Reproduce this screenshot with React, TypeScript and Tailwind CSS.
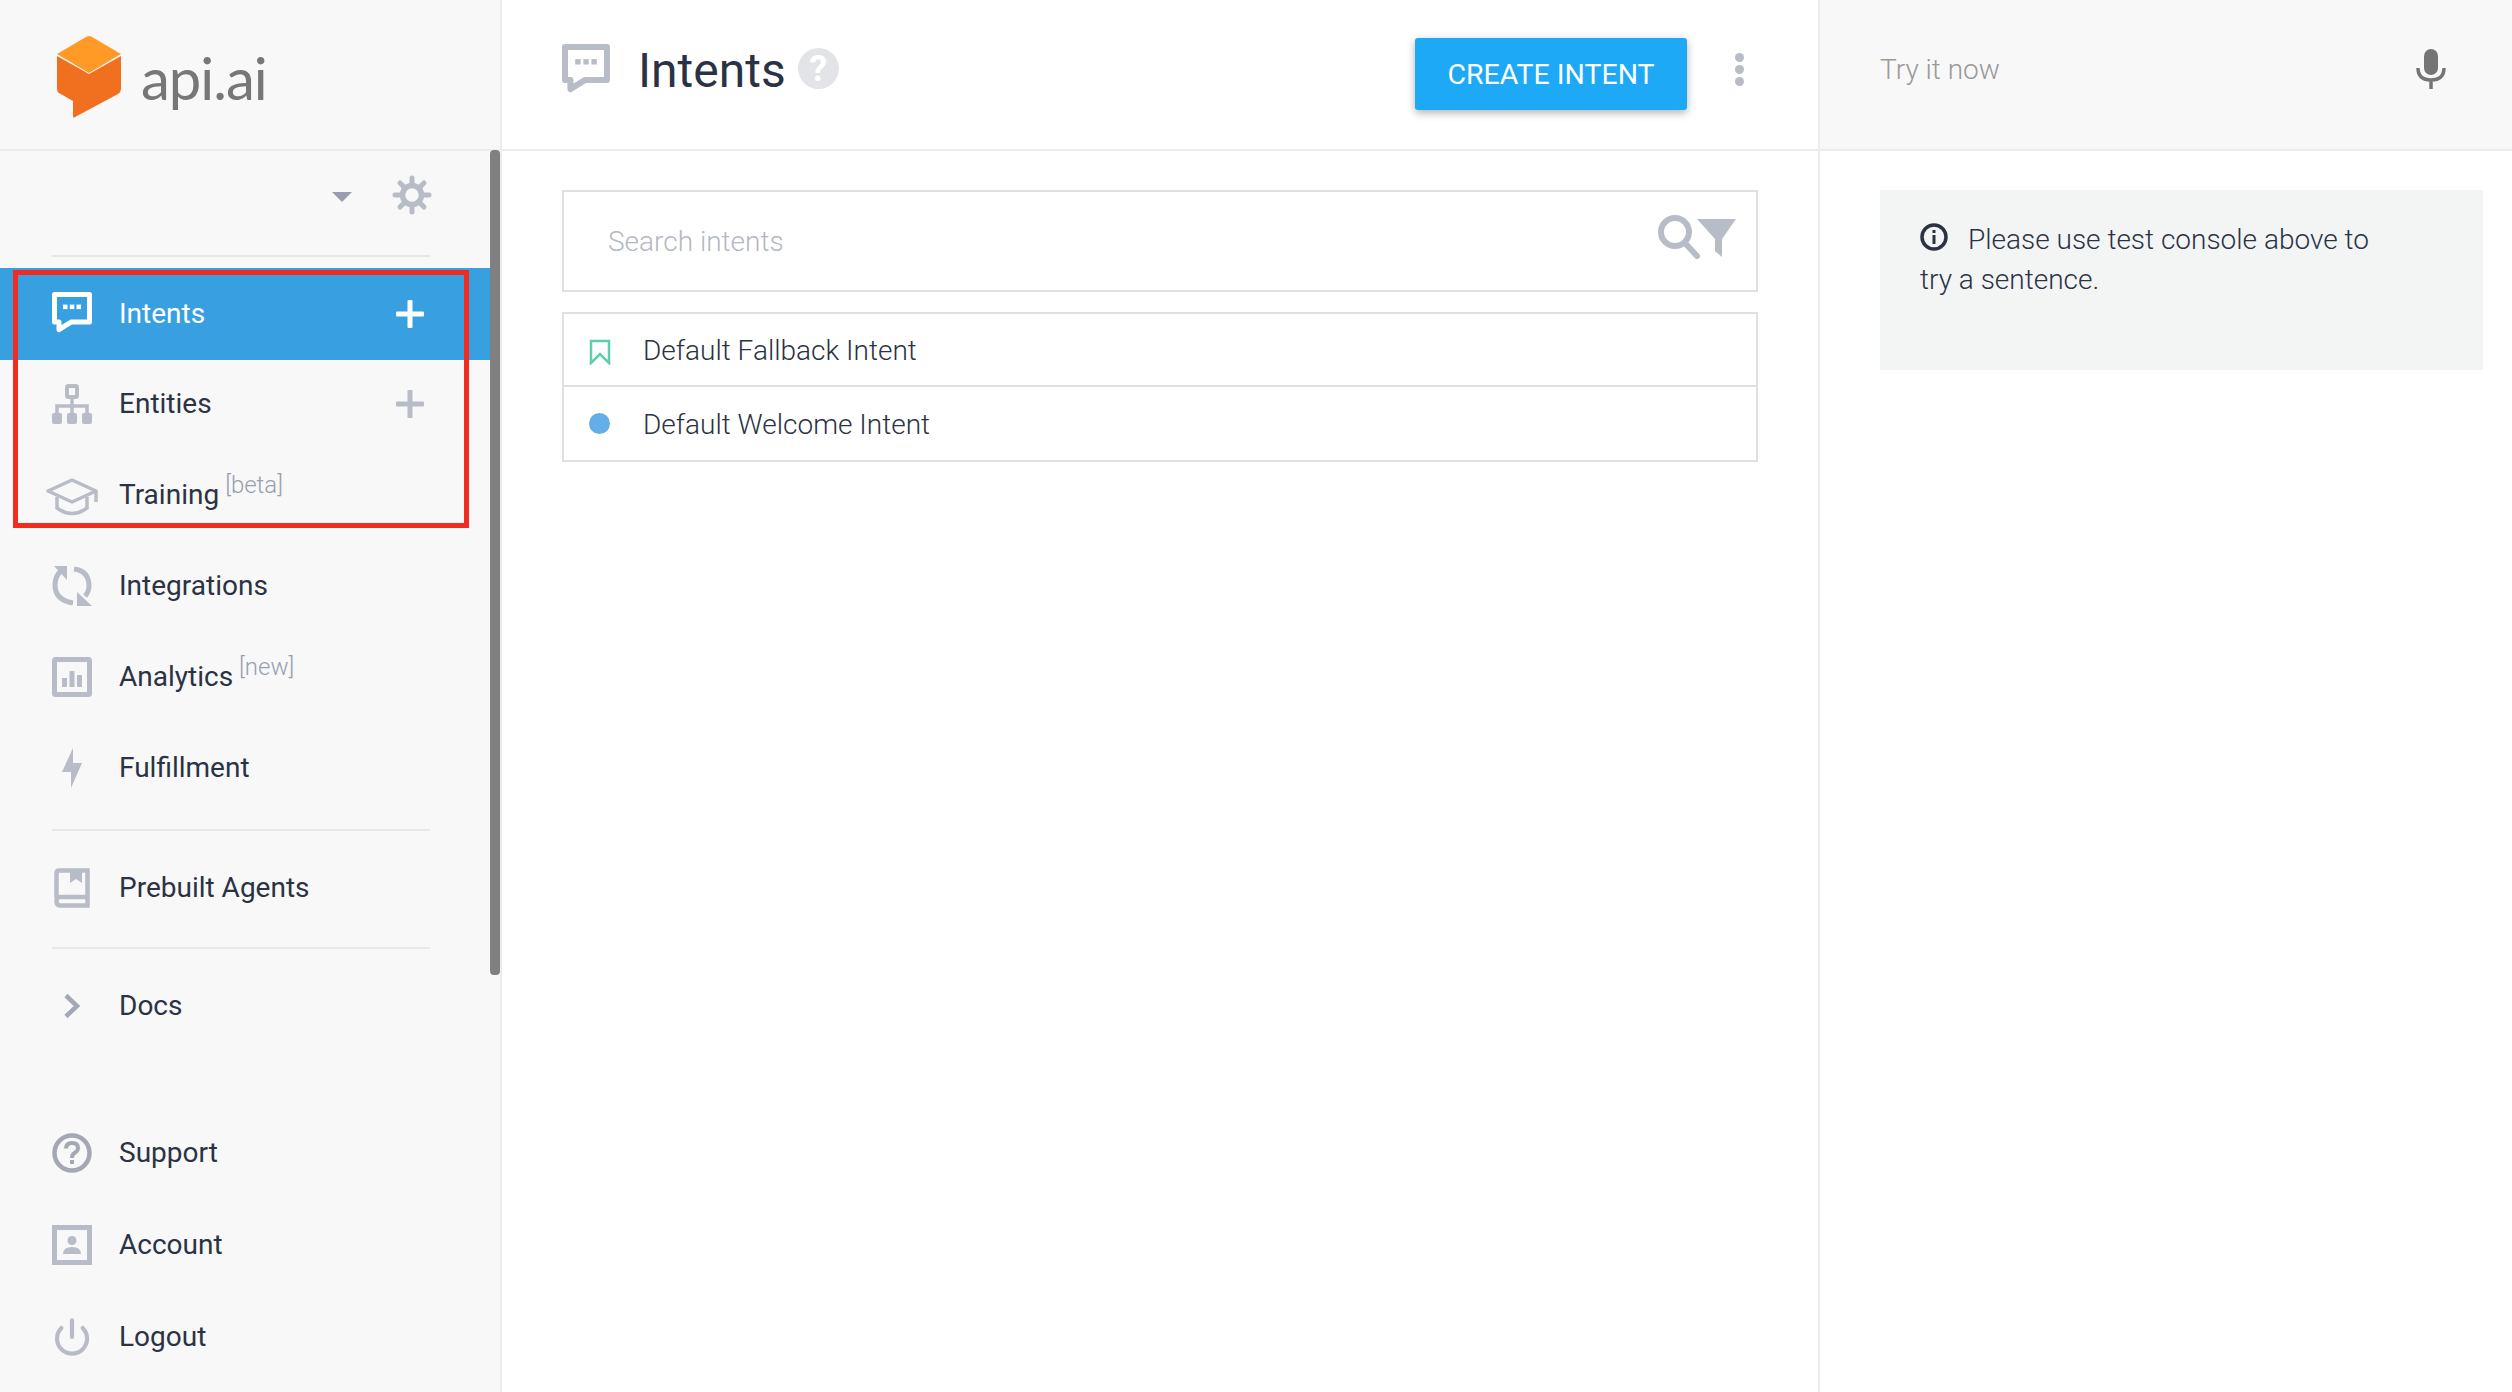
import type { ReactNode } from "react";
import { Power } from "lucide-react";

const ICON = "#b8bcc6";

function Logo() {
  return (
    <svg width="66" height="84" viewBox="0 0 66 84" className="shrink-0">
      <path
        d="M1 21 L33 39 L65 21 L65 54 Q65 57 62 59 L19 82 Q17 83.500 17 81 L17 66 L3 58 Q1 57 1 54 Z"
        fill="#f1701f"
      />
      <path d="M33 1 Q34 1 36 2 L65 19 L33 38 L1 19 L30 2 Q32 1 33 1 Z" fill="#ff9a27" />
    </svg>
  );
}

function ChatIcon({ color, size = 40 }: { color: string; size?: number }) {
  return (
    <svg width={size} height={size * 1.08} viewBox="0 0 40 43" fill="none">
      <path
        d="M2.500 2.500 H37.500 V30 H19 L7 37.500 V30 H2.500 Z"
        stroke={color}
        strokeWidth="5"
        strokeLinejoin="round"
      />
      <rect x="11" y="12.500" width="4.500" height="4.500" fill={color} />
      <rect x="17.800" y="12.500" width="4.500" height="4.500" fill={color} />
      <rect x="24.500" y="12.500" width="4.500" height="4.500" fill={color} />
    </svg>
  );
}

function EntitiesIcon() {
  return (
    <svg width="40" height="40" viewBox="0 0 40 40" fill="none">
      <rect x="15" y="2" width="10" height="11" rx="1.500" stroke={ICON} strokeWidth="4" />
      <path d="M20 13 V30 M5 30 V22 H35 V30" stroke={ICON} strokeWidth="3.500" />
      <rect x="0" y="29" width="10" height="11" rx="2" fill={ICON} />
      <rect x="15" y="29" width="10" height="11" rx="2" fill={ICON} />
      <rect x="30" y="29" width="10" height="11" rx="2" fill={ICON} />
    </svg>
  );
}

function TrainingIcon() {
  return (
    <svg width="54" height="38" viewBox="0 0 54 38" fill="none" className="shrink-0 mt-[4px]">
      <path d="M27 2 L51 13 L27 24 L3 13 Z" stroke={ICON} strokeWidth="3.500" strokeLinejoin="round" />
      <path d="M12 19 V30 Q27 41 42 30 V19" stroke={ICON} strokeWidth="3.500" />
      <path d="M51 13 V24" stroke={ICON} strokeWidth="3.500" />
    </svg>
  );
}

function IntegrationsIcon() {
  return (
    <svg width="40" height="42" viewBox="0 0 40 42" fill="none">
      <path d="M9 6 Q3 11 3 20 Q3 35 21 38" stroke={ICON} strokeWidth="5" />
      <path d="M2 1 L15 1 L15 15 Z" fill={ICON} />
      <path d="M22 4 Q37 6 37 21 Q37 27 33 31" stroke={ICON} strokeWidth="5" />
      <path d="M25 27 L25 41 L40 41 Z" fill={ICON} />
    </svg>
  );
}

function AnalyticsIcon() {
  return (
    <svg width="40" height="40" viewBox="0 0 40 40" fill="none">
      <rect x="2.500" y="2.500" width="35" height="35" stroke={ICON} strokeWidth="5" rx="1" />
      <rect x="10" y="21" width="5" height="9" fill={ICON} />
      <rect x="17.500" y="14" width="5" height="16" fill={ICON} />
      <rect x="25" y="18" width="5" height="12" fill={ICON} />
    </svg>
  );
}

function BoltIcon() {
  return (
    <svg width="20" height="40" viewBox="0 0 20 40">
      <path d="M11 0 V15 H20 L9 40 V24 H0 Z" fill={ICON} />
    </svg>
  );
}

function BookIcon() {
  return (
    <svg width="36" height="40" viewBox="0 0 36 40" fill="none">
      <path
        d="M2.500 30 V5 Q2.500 2.500 5 2.500 H33.500 V37.500 H6 Q2.500 37.500 2.500 33 Q2.500 29 6 29 H33.500"
        stroke={ICON}
        strokeWidth="4.500"
      />
      <path d="M16 2 H28 V15 L22 11 L16 15 Z" fill={ICON} />
    </svg>
  );
}

function ChevronIcon() {
  return (
    <svg width="16" height="26" viewBox="0 0 16 26" fill="none">
      <path d="M2 2.500 L13 13 L2 23.500" stroke="#a3a8b4" strokeWidth="4.500" />
    </svg>
  );
}

function HelpIcon() {
  return (
    <svg width="40" height="40" viewBox="0 0 40 40" fill="none">
      <circle cx="20" cy="20" r="17.500" stroke="#a3a8b4" strokeWidth="4.500" />
      <path d="M14 15.500 Q14 10 20 10 Q26 10 26 15 Q26 18 22.500 20 Q20 21.500 20 25" stroke="#a3a8b4" strokeWidth="4" />
      <rect x="18" y="27" width="4" height="4" fill="#a3a8b4" />
    </svg>
  );
}

function AccountIcon() {
  return (
    <svg width="40" height="40" viewBox="0 0 40 40" fill="none">
      <rect x="2.500" y="2.500" width="35" height="35" stroke={ICON} strokeWidth="5" />
      <circle cx="20" cy="15.500" r="4.500" fill={ICON} />
      <path d="M11 29 Q11 22 20 22 Q29 22 29 29 Z" fill={ICON} />
    </svg>
  );
}

function GearIcon() {
  return (
    <svg width="40" height="40" viewBox="0 0 40 40" fill="none">
      <circle cx="20" cy="20" r="9.500" stroke={ICON} strokeWidth="5.500" />
      <g stroke={ICON} strokeWidth="5" strokeLinecap="round">
        <path d="M20 3 V8" />
        <path d="M20 32 V37" />
        <path d="M3 20 H8" />
        <path d="M32 20 H37" />
        <path d="M8 8 L11.500 11.500" />
        <path d="M28.500 28.500 L32 32" />
        <path d="M32 8 L28.500 11.500" />
        <path d="M11.500 28.500 L8 32" />
      </g>
    </svg>
  );
}

function PlusIcon({ color }: { color: string }) {
  return (
    <svg width="28" height="28" viewBox="0 0 28 28">
      <rect x="0" y="11.500" width="28" height="5" rx="1" fill={color} />
      <rect x="11.500" y="0" width="5" height="28" rx="1" fill={color} />
    </svg>
  );
}

type NavItem = {
  label: string;
  icon: ReactNode;
  tag?: string;
  plus?: boolean;
  active?: boolean;
};

function NavRow({ label, icon, tag, plus, active }: NavItem) {
  return (
    <div className={`h-[91px] flex items-center pl-[52px] pr-[76px] ${active ? "bg-[#38a0e0]" : ""}`}>
      <div className="w-[40px] h-[44px] flex items-center justify-center shrink-0">{icon}</div>
      <div className={`ml-[27px] text-[28px] flex-1 ${active ? "text-white" : "text-[#2b3244]"}`}>
        {label}
        {tag && <span className="ml-[6px] text-[24px] font-light text-[#989eae] relative -top-[11px]">{tag}</span>}
      </div>
      {plus && <PlusIcon color={active ? "#ffffff" : ICON} />}
    </div>
  );
}

function Divider() {
  return <div className="h-[2px] mx-[52px] w-[378px] bg-[#e8e8e8]" />;
}

function Sidebar() {
  return (
    <aside className="relative w-[502px] shrink-0 h-full bg-[#f8f8f8] border-r-2 border-[#ececec]">
      <div className="h-[151px] border-b-2 border-[#ececec] flex items-center pl-[56px] pt-[5px]">
        <Logo />
        <span className="ml-[19px] text-[58px] tracking-[-1px] text-[#777777] font-['Lato',sans-serif]">api.ai</span>
      </div>
      <div className="h-[104px] flex items-center justify-end pr-[68px] pb-[16px]">
        <div className="w-0 h-0 border-x-[10px] border-x-transparent border-t-[10px] border-t-[#989eae] mr-[40px] mt-[4px]" />
        <GearIcon />
      </div>
      <Divider />
      <div className="mt-[11px]">
        <div className="bg-[#38a0e0] pb-[1px]">
          <NavRow label="Intents" icon={<ChatIcon color="#ffffff" />} plus active />
        </div>
        <div className="-mt-[2px]">
          <NavRow label="Entities" icon={<EntitiesIcon />} plus />
          <NavRow label="Training" tag="[beta]" icon={<TrainingIcon />} />
          <NavRow label="Integrations" icon={<IntegrationsIcon />} />
          <NavRow label="Analytics" tag="[new]" icon={<AnalyticsIcon />} />
          <NavRow label="Fulfillment" icon={<BoltIcon />} />
        </div>
      </div>
      <div className="mt-[16px]">
        <Divider />
      </div>
      <div className="h-[116px] flex items-center pl-[52px] pb-[3px]">
        <div className="w-[40px] flex justify-center">
          <BookIcon />
        </div>
        <span className="ml-[27px] text-[28px] text-[#2b3244]">Prebuilt Agents</span>
      </div>
      <Divider />
      <div className="h-[114px] flex items-center pl-[52px]">
        <div className="w-[40px] flex justify-center">
          <ChevronIcon />
        </div>
        <span className="ml-[27px] text-[28px] text-[#2b3244]">Docs</span>
      </div>
      <div className="mt-[44px]">
        <div className="h-[92px] flex items-center pl-[52px]">
          <HelpIcon />
          <span className="ml-[27px] text-[28px] text-[#2b3244]">Support</span>
        </div>
        <div className="h-[92px] flex items-center pl-[52px]">
          <AccountIcon />
          <span className="ml-[27px] text-[28px] text-[#2b3244]">Account</span>
        </div>
        <div className="h-[92px] flex items-center pl-[52px]">
          <div className="w-[40px] flex justify-center">
            <Power size={44} strokeWidth={2.5} color={ICON} />
          </div>
          <span className="ml-[27px] text-[28px] text-[#2b3244]">Logout</span>
        </div>
      </div>

      {/* scrollbar thumb */}
      <div className="absolute left-[490px] top-[150px] w-[10px] h-[825px] rounded-t-[4px] rounded-b-[4px] bg-[#808080]" />
      {/* annotation box */}
      <div className="absolute left-[13px] top-[270px] w-[456px] h-[258px] border-[5px] border-[#f22b20]" />
    </aside>
  );
}

function Main() {
  return (
    <main className="flex-1 min-w-0 h-full border-r-2 border-[#ececec] bg-white">
      <header className="h-[151px] border-b-2 border-[#ececec] flex items-start pl-[60px] pr-[74px]">
        <div className="mt-[44px]">
          <ChatIcon color={ICON} size={48} />
        </div>
        <h1 className="ml-[28px] mt-[41px] text-[48px] leading-[60px] font-normal text-[#2b3244]">Intents</h1>
        <div className="ml-[12px] mt-[48px] w-[41px] h-[41px] rounded-full bg-[#e2e4e8] flex items-center justify-center text-white text-[36px] font-bold leading-none">
          ?
        </div>
        <button className="ml-auto mt-[38px] w-[272px] h-[72px] pt-[2px] rounded-[3px] bg-[#1da9f5] text-white text-[28.500px] shadow-[0_3px_8px_rgba(0,0,0,0.3)]">
          CREATE INTENT
        </button>
        <div className="ml-[48px] mt-[53px] flex flex-col gap-[3px]">
          <div className="w-[9px] h-[9px] rounded-full bg-[#b8bcc6]" />
          <div className="w-[9px] h-[9px] rounded-full bg-[#b8bcc6]" />
          <div className="w-[9px] h-[9px] rounded-full bg-[#b8bcc6]" />
        </div>
      </header>
      <div className="pl-[60px] pr-[60px] pt-[39px]">
        <div className="h-[102px] border-2 border-[#e0e0e0] flex items-center pl-[44px] pr-[19px]">
          <span className="flex-1 pt-[2px] text-[28px] font-light text-[#b4b8c2]">Search intents</span>
          <svg width="80" height="44" viewBox="0 0 80 44" fill="none" className="-mt-[9px]">
            <circle cx="18" cy="17" r="14" stroke={ICON} strokeWidth="6" />
            <path d="M28 28 L40 41" stroke={ICON} strokeWidth="6" strokeLinecap="round" />
            <path d="M40 4 H79 L65 24 V42 L58 36 V24 Z" fill={ICON} />
          </svg>
        </div>
        <div className="mt-[20px] border-2 border-[#e0e0e0]">
          <div className="h-[73px] flex items-center pl-[25px] border-b-2 border-[#e0e0e0]">
            <svg width="22" height="26" viewBox="0 0 22 26" fill="none" className="shrink-0 mt-[4px]">
              <path d="M2 2 H20 V24 L11 15 L2 24 Z" stroke="#5ccfae" strokeWidth="2.500" />
            </svg>
            <span className="ml-[32px] pt-[2px] text-[28px] font-light text-[#2b3244]">Default Fallback Intent</span>
          </div>
          <div className="h-[73px] flex items-center pl-[25px]">
            <div className="w-[21px] h-[21px] rounded-full bg-[#63ade9] shrink-0" />
            <span className="ml-[33px] pt-[2px] text-[28px] font-light text-[#2b3244]">Default Welcome Intent</span>
          </div>
        </div>
      </div>
    </main>
  );
}

function TestPanel() {
  return (
    <section className="w-[692px] shrink-0 h-full bg-white">
      <div className="h-[151px] bg-[#f8f8f8] border-b-2 border-[#ececec] flex items-center pl-[60px] pr-[66px]">
        <span className="flex-1 text-[28px] font-light text-[#9a9a9a] -mt-[9px]">Try it now</span>
        <svg width="30" height="40" viewBox="0 0 30 40" fill="none" className="-mt-[11px]">
          <rect x="8" y="0" width="14" height="26" rx="7" fill="#757575" />
          <path d="M2 19 Q2 31 15 31 Q28 31 28 19 M15 31 V40" stroke="#757575" strokeWidth="3.500" />
        </svg>
      </div>
      <div className="pl-[60px] pr-[29px] pt-[39px]">
        <div className="h-[180px] bg-[#f3f5f5] pl-[40px] pr-[100px] pt-[30px] text-[28px] leading-[40px] font-light text-[#2b3244]">
          <svg width="28" height="28" viewBox="0 0 28 28" fill="none" className="inline-block mr-[20px] -mt-[10px]">
            <circle cx="14" cy="14" r="12" stroke="#2b3244" strokeWidth="3.500" />
            <rect x="12.500" y="12" width="3" height="9" fill="#2b3244" />
            <rect x="12.500" y="7" width="3" height="3" fill="#2b3244" />
          </svg>
          Please use test console above to try a sentence.
        </div>
      </div>
    </section>
  );
}

export default function App() {
  return (
    <div className="h-screen w-full flex overflow-hidden bg-white font-['Roboto',sans-serif]">
      <Sidebar />
      <Main />
      <TestPanel />
    </div>
  );
}
